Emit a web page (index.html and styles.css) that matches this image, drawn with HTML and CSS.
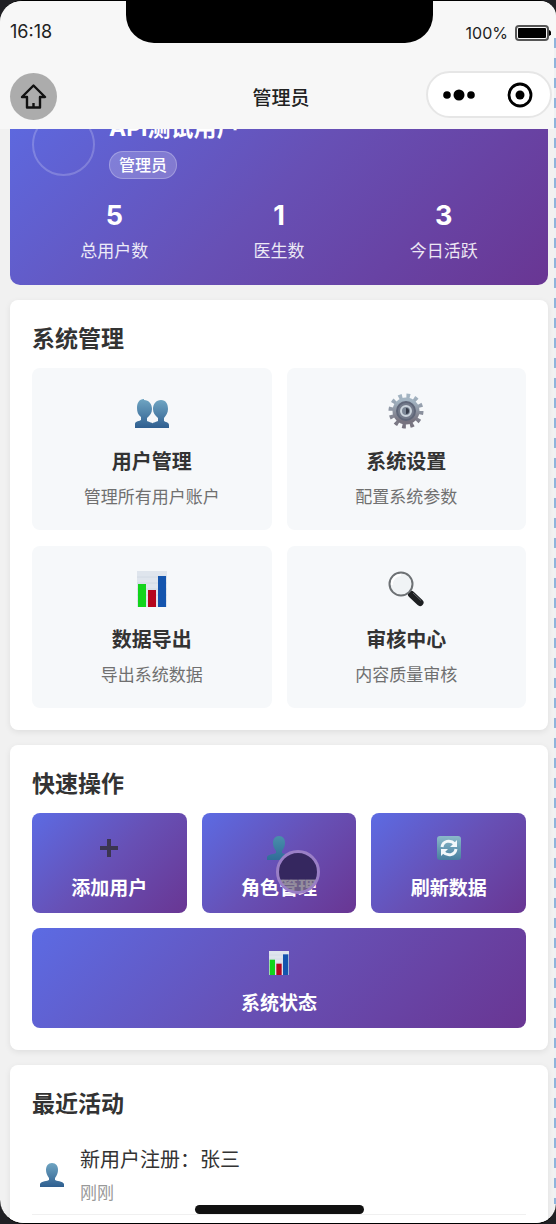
FILE: index.html
```html
<!DOCTYPE html>
<html lang="zh-CN">
<head>
<meta charset="utf-8">
<meta name="viewport" content="width=device-width, initial-scale=1">
<title>管理员</title>
<link rel="stylesheet" href="styles.css">
</head>
<body>
<svg class="defs" aria-hidden="true">
  <defs>
    <linearGradient id="blue" x1="0" y1="0" x2="0" y2="1"><stop offset="0" stop-color="#6fa5c2"/><stop offset="1" stop-color="#2f5f90"/></linearGradient>
    <linearGradient id="teal" x1="0" y1="0" x2="0" y2="1"><stop offset="0" stop-color="#4a8fab"/><stop offset="1" stop-color="#2f6d98"/></linearGradient>
    <linearGradient id="steel" x1="0" y1="0" x2="0" y2="1"><stop offset="0" stop-color="#a3b4c2"/><stop offset="1" stop-color="#77737f"/></linearGradient>
    <linearGradient id="tile" x1="0" y1="0" x2="0" y2="1"><stop offset="0" stop-color="#8bb9ca"/><stop offset="1" stop-color="#477f9f"/></linearGradient>
    <symbol id="person" viewBox="0 0 24 24"><path d="M12 0c4 0 6 3 6 7 0 3-1 5-3 8v2c1 1 8 1 9 4v3H0v-3c1-3 8-3 9-4v-2c-2-3-3-5-3-8 0-4 2-7 6-7z"/></symbol>
    <symbol id="chart" viewBox="0 0 30 36">
      <path fill="#dfe5ed" d="M0 0h30v36H0z"/><path stroke="#d2dae4" d="M0 6h30M0 12h30M0 18h30M0 24h30M0 30h30"/>
      <path fill="#12d41b" d="M1 13h8v23H1z"/><path fill="#b5061d" d="M11 19h8v17h-8z"/><path fill="#1455ae" d="M21 5h8v31h-8z"/>
    </symbol>
  </defs>
</svg>
<div class="phone">
  <header class="top">
    <div class="status">
      <time class="clock">16:18</time>
      <div class="notch"></div>
      <div class="power">100%
        <svg width="36" height="16" viewBox="0 0 36 16" aria-hidden="true"><rect x="1" y="1" width="32" height="14" rx="3" fill="none" stroke="#555" stroke-width="2"/><rect x="3" y="3" width="28" height="10" rx="1"/><path d="M34 5c3 1 3 5 0 6z"/></svg>
      </div>
    </div>
    <nav class="nav">
      <button class="home" aria-label="首页"><svg width="27" height="25" viewBox="0 0 27 25" fill="none" stroke="#111" stroke-width="2.400" stroke-linejoin="round"><path d="M13.500 1.500 25 13h-5v10.500H7V13H2z"/><path d="M13.500 19v4"/></svg></button>
      <h1 class="nav-title">管理员</h1>
      <div class="capsule">
        <button class="cap-button" aria-label="更多"><svg width="34" height="12" viewBox="0 0 34 12"><circle cx="5" cy="6" r="3.800"/><circle cx="17" cy="6" r="5.500"/><circle cx="29" cy="6" r="3.800"/></svg></button>
        <button class="cap-button" aria-label="关闭"><svg width="26" height="26" viewBox="0 0 26 26"><circle cx="13" cy="13" r="11" fill="none" stroke="#000" stroke-width="2.800"/><circle cx="13" cy="13" r="4.500"/></svg></button>
      </div>
    </nav>
  </header>

  <main class="content">
    <section class="hero">
      <div class="profile">
        <div class="avatar"></div>
        <div class="identity"><h2 class="name">API测试用户</h2><span class="badge">管理员</span></div>
      </div>
      <div class="stats">
        <div class="stat"><strong class="number">5</strong><span class="stat-label">总用户数</span></div>
        <div class="stat"><strong class="number">1</strong><span class="stat-label">医生数</span></div>
        <div class="stat"><strong class="number">3</strong><span class="stat-label">今日活跃</span></div>
      </div>
    </section>

    <section class="card">
      <h2 class="card-title">系统管理</h2>
      <div class="tiles">
        <button class="tile">
          <span class="tile-icon"><svg width="36" height="36" viewBox="0 0 36 36" fill="url(#blue)"><path d="M10 7c5 0 8 4 8 9 0 4-2 6-5 9v3c1 1 5 1 6 3v4H1v-4c0-3 5-3 6-4v-3c-3-2-4-5-4-9 0-5 2-9 7-9z"/><path d="M27 7c5 0 7 4 7 9 0 4-2 6-4 9v3c1 1 5 1 5 4v3H18v-4c1-2 5-2 6-3v-3c-3-3-5-5-5-9 0-5 3-9 8-9z"/></svg></span>
          <span class="tile-title">用户管理</span><span class="tile-text">管理所有用户账户</span>
        </button>
        <button class="tile">
          <span class="tile-icon"><svg width="36" height="36" viewBox="0 0 36 36"><circle cx="18" cy="18" r="15" fill="none" stroke="url(#steel)" stroke-width="5" stroke-dasharray="3.600 4.250"/><circle cx="18" cy="18" r="10" fill="none" stroke="url(#steel)" stroke-width="7"/><circle cx="18" cy="18" r="9" fill="#747b8b" stroke="#5f6678" stroke-width="2"/><circle cx="18" cy="18" r="5" fill="#7c8796" stroke="#ccd5dd" stroke-width="2"/><path d="M18 15a3 3 0 0 1 0 6z" fill="#353b49"/></svg></span>
          <span class="tile-title">系统设置</span><span class="tile-text">配置系统参数</span>
        </button>
        <button class="tile">
          <span class="tile-icon"><svg width="30" height="36"><use href="#chart"/></svg></span>
          <span class="tile-title">数据导出</span><span class="tile-text">导出系统数据</span>
        </button>
        <button class="tile">
          <span class="tile-icon"><svg width="36" height="36" viewBox="0 0 36 36"><path d="m20 21 4 4" stroke="#777" stroke-width="3"/><path d="m23.500 23.500 8.500 8" stroke="#1d1f21" stroke-width="7" stroke-linecap="round"/><path d="m25 22 8 7.500" stroke="#606468" stroke-width="1"/><circle cx="13" cy="13" r="11.500" fill="#f0f3f5" stroke="#6d7174" stroke-width="2"/><path d="M4 14a9 9 0 0 1 9-10" fill="none" stroke="#fff" stroke-width="2"/></svg></span>
          <span class="tile-title">审核中心</span><span class="tile-text">内容质量审核</span>
        </button>
      </div>
    </section>

    <section class="card">
      <h2 class="card-title">快速操作</h2>
      <div class="actions">
        <button class="action"><svg width="24" height="24" viewBox="0 0 24 24"><path d="M12 3v18M3 12h18" stroke="#3b3550" stroke-width="4"/></svg>添加用户</button>
        <button class="action"><svg width="24" height="24" fill="url(#teal)"><use href="#person"/></svg>角色管理<span class="pointer"></span></button>
        <button class="action"><svg width="24" height="24" viewBox="0 0 24 24"><rect width="24" height="24" rx="3" fill="url(#tile)"/><path d="M5 11c1-6 8-8 13-3M19 13c-1 6-8 8-13 3" fill="none" stroke="#f2f8fb" stroke-width="3"/><path d="M20 4v7h-7zM4 20v-7h7z" fill="#f2f8fb"/></svg>刷新数据</button>
        <button class="action wide"><svg width="24" height="24"><use href="#chart"/></svg>系统状态</button>
      </div>
    </section>

    <section class="card">
      <h2 class="card-title">最近活动</h2>
      <ul class="feed">
        <li class="event">
          <svg class="event-icon" width="24" height="24" fill="url(#blue)" aria-hidden="true"><use href="#person"/></svg>
          <div class="event-body"><span class="event-text">新用户注册：张三</span><time class="event-time">刚刚</time></div>
        </li>
      </ul>
    </section>
  </main>
  <div class="home-bar"></div>
</div>
<div class="edge"></div>
</body>
</html>
```
FILE: styles.css
```css
* { box-sizing: border-box; }

body {
  margin: 0;
  position: relative;
  background: #202024;
  color: #333;
  font-family: Inter, "Noto Sans CJK SC", sans-serif;
}

h1, h2, ul { margin: 0; padding: 0; }
button { border: 0; margin: 0; padding: 0; font: inherit; color: inherit; }
svg { display: block; flex: none; }
.defs { position: absolute; width: 0; height: 0; }

.phone {
  position: relative;
  display: flex;
  flex-direction: column;
  height: 100vh;
  overflow: hidden;
  border-top: 1px solid #000;
  border-bottom: 1px solid #000;
  border-radius: 22px 16px 20px 24px;
  background: #f1f1f1;
}

.top { flex: none; background: #f7f7f7; }

.status {
  display: grid;
  grid-template-columns: 126px 1fr 123px;
  height: 62px;
  color: #222;
}
.clock { padding: 20px 0 0 10px; font-size: 18px; line-height: 22px; }
.notch { height: 42px; border-radius: 0 0 28px 28px; background: #000; }
.power {
  display: flex;
  justify-content: flex-end;
  gap: 7px;
  height: 22px;
  margin-top: 21px;
  padding-right: 5px;
  align-items: center;
  font-size: 16px;
}

.nav {
  display: grid;
  grid-template-columns: 1fr auto 1fr;
  align-items: center;
  height: 66px;
  padding: 0 4px 0 10px;
}
.home {
  display: grid;
  place-items: center;
  width: 47px;
  height: 47px;
  border-radius: 50%;
  background: #acacac;
}
.nav-title { padding-top: 6px; font-size: 19px; font-weight: 500; line-height: 28px; color: #222; }
.capsule {
  display: grid;
  grid-template-columns: 1fr 1fr;
  place-self: start end;
  width: 126px;
  height: 47px;
  margin-top: 8px;
  border: 2px solid #e6e6e6;
  border-radius: 24px;
  background: #fff;
}
.cap-button { display: grid; place-items: center; background: none; }

.content {
  flex: 1;
  min-height: 0;
  display: flex;
  flex-direction: column;
  gap: 15px;
  overflow: hidden;
  padding: 0 8px 0 10px;
}
.content > * { flex: none; }

/* The list is scrolled, so the upper part of the hero lies under the bar. */
.hero {
  margin-top: -41px;
  padding: 22px;
  border-radius: 10px;
  background: linear-gradient(135deg, #5c6be3 0%, #6750b5 50%, #693693 100%);
  color: #fff;
}
.profile { display: flex; align-items: center; gap: 14px; }
.avatar {
  width: 63px;
  height: 63px;
  border: 2px solid rgba(255, 255, 255, .2);
  border-radius: 50%;
}
.identity { display: flex; flex-direction: column; align-items: flex-start; gap: 5px; }
.name { font-size: 23px; line-height: 36px; }
.badge {
  padding: 0 9px;
  border: 1px solid rgba(255, 255, 255, .25);
  border-radius: 14px;
  background: rgba(255, 255, 255, .2);
  font-size: 16px;
  font-weight: 500;
  line-height: 26px;
}
.stats { display: grid; grid-template-columns: repeat(3, 1fr); margin-top: 20px; }
.stat { display: flex; flex-direction: column; align-items: center; gap: 6px; }
.number { font-size: 27px; line-height: 34px; }
.stat-label { font-size: 17px; line-height: 24px; opacity: .88; }

.card {
  padding: 22px;
  border-radius: 8px;
  background: #fff;
  box-shadow: 0 2px 6px rgba(0, 0, 0, .08);
}
.card-title { margin-bottom: 12px; font-size: 23px; line-height: 34px; }

.tiles { display: grid; grid-template-columns: 1fr 1fr; gap: 16px 15px; }
.tile {
  display: flex;
  flex-direction: column;
  align-items: center;
  padding: 22px 8px 21px;
  border-radius: 8px;
  background: #f6f8fa;
}
.tile-icon { display: grid; place-items: center; height: 42px; }
.tile-title { margin-top: 16px; font-size: 20px; font-weight: 700; line-height: 28px; }
.tile-text { margin-top: 9px; font-size: 17px; line-height: 24px; color: #707070; }

.actions { display: grid; grid-template-columns: repeat(3, 1fr); gap: 15px; }
.action {
  position: relative;
  display: flex;
  flex-direction: column;
  align-items: center;
  gap: 16px;
  padding: 23px 8px 11px;
  border-radius: 8px;
  background: linear-gradient(135deg, #5c6be3 0%, #6750b5 50%, #693693 100%);
  color: #fff;
  font-size: 19px;
  font-weight: 700;
  line-height: 26px;
}
.wide { grid-column: 1 / -1; }
.pointer {
  position: absolute;
  left: 48%;
  top: 37px;
  width: 44px;
  height: 44px;
  border: 3px solid #9a7fc6;
  border-radius: 50%;
  background: linear-gradient(#35275f 68%, rgba(112, 103, 125, .75) 72%);
}

.feed { list-style: none; }
.event {
  display: flex;
  align-items: center;
  gap: 16px;
  padding: 14px 0 11px 8px;
  border-bottom: 1px solid #f0f0f0;
}
.event-body { display: flex; flex-direction: column; gap: 10px; }
.event-text { font-size: 20px; line-height: 26px; }
.event-time { font-size: 17px; line-height: 20px; color: #999; }

.home-bar {
  position: absolute;
  left: 35%;
  right: 34.5%;
  bottom: 9px;
  height: 9px;
  border-radius: 5px;
  background: #111;
}

.edge {
  position: absolute;
  top: 38px;
  right: 0;
  bottom: 20px;
  width: 2px;
  background: repeating-linear-gradient(#8fb4dc 0 10px, #eef1f3 10px 20px);
}
```
